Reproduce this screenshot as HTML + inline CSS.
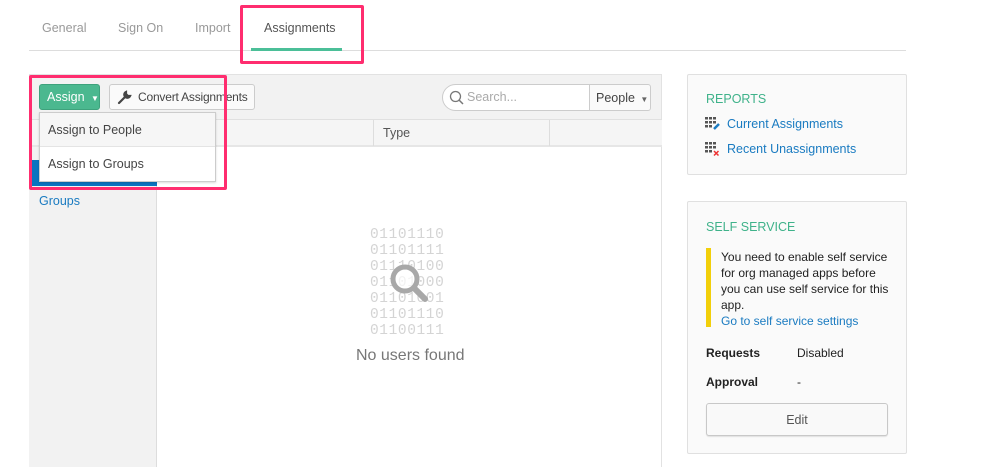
<!DOCTYPE html>
<html style="width:998px;height:467px;overflow:hidden"><head><meta charset="utf-8"><style>
*{box-sizing:border-box;margin:0;padding:0}
body{width:998px;height:467px;background:#fff;font-family:"Liberation Sans",sans-serif;position:relative;overflow:hidden;color:#333}
.a{position:absolute;white-space:nowrap}
.tab{position:absolute;top:21px;font-size:12.5px;color:#999}
.pink{position:absolute;border:3px solid #ff2d6f;border-radius:2px}
.link{color:#1a7bc1;font-size:12.5px}
.bin{font-family:"Liberation Mono",monospace;font-size:14.5px;color:#d4d4d4;line-height:16px;letter-spacing:0.6px}
</style></head><body>
<div class="tab" style="left:42px">General</div>
<div class="tab" style="left:118px">Sign On</div>
<div class="tab" style="left:195px">Import</div>
<div class="tab" style="left:264px;color:#555">Assignments</div>
<div class="a" style="left:29px;top:50px;width:877px;height:1px;background:#ddd"></div>
<div class="a" style="left:251px;top:48px;width:91px;height:3px;background:#4bbf98"></div>
<div class="pink" style="left:240px;top:5px;width:124px;height:59px"></div>

<!-- main panel -->
<div class="a" style="left:29px;top:74px;width:633px;height:393px;border:1px solid #e2e2e2;border-bottom:none;background:#fff"></div>
<div class="a" style="left:29px;top:74px;width:633px;height:46px;background:#f2f2f2;border:1px solid #e2e2e2;border-bottom:none"></div>
<div class="a" style="left:29px;top:119px;width:633px;height:28px;background:#f5f5f5;border-top:1px solid #e0e0e0;border-bottom:2px solid #e6e6e6"></div>
<div class="a" style="left:373px;top:120px;width:1px;height:26px;background:#ddd"></div>
<div class="a" style="left:549px;top:120px;width:1px;height:26px;background:#ddd"></div>
<div class="a" style="left:383px;top:126px;font-size:12.5px;color:#555">Type</div>
<div class="a" style="left:29px;top:147px;width:128px;height:320px;background:#f2f2f2;border-right:1px solid #ddd"></div>
<div class="a" style="left:31px;top:160px;width:126px;height:26px;background:#0a74c0"></div>
<div class="a link" style="left:39px;top:194px">Groups</div>

<!-- buttons -->
<div class="a" style="left:39px;top:84px;width:61px;height:26px;background:#4bb88f;border:1px solid #3ea27c;border-radius:3px;color:#fff;font-size:12.5px;padding:5px 0 0 7px">Assign <span style="font-size:8px;margin-left:3px">▼</span></div>
<div class="a" style="left:109px;top:84px;width:146px;height:26px;background:#fafafa;border:1px solid #ccc;border-radius:3px;font-size:12px;color:#444;padding:5px 0 0 28px;letter-spacing:-0.2px">Convert Assignments</div>
<svg class="a" style="left:117px;top:89px" width="16" height="16" viewBox="0 0 16 16"><path d="M2 14 L8 8 M9 3 a3 3 0 1 0 4 4 l-2 0 -2 -2 z" stroke="#444" stroke-width="2.2" fill="#444" stroke-linecap="round"/></svg>

<!-- dropdown -->
<div class="a" style="left:39px;top:112px;width:177px;height:70px;background:#fff;border:1px solid #ccc;box-shadow:0 1px 2px rgba(0,0,0,.15)"></div>
<div class="a" style="left:40px;top:113px;width:175px;height:34px;background:#f6f6f6;border-bottom:1px solid #e4e4e4"></div>
<div class="a" style="left:48px;top:123px;font-size:12.5px;color:#444">Assign to People</div>
<div class="a" style="left:48px;top:157px;font-size:12.5px;color:#444">Assign to Groups</div>
<div class="pink" style="left:29px;top:75px;width:198px;height:115px"></div>

<!-- search -->
<div class="a" style="left:442px;top:84px;width:148px;height:27px;background:#fff;border:1px solid #ccc;border-radius:14px 0 0 14px"></div>
<svg class="a" style="left:449px;top:90px" width="16" height="16"><circle cx="6.5" cy="6.5" r="5" stroke="#777" stroke-width="1.3" fill="none"/><path d="M10 10 L14 14" stroke="#777" stroke-width="1.5"/></svg>
<div class="a" style="left:467px;top:90px;font-size:12.5px;color:#aaa">Search...</div>
<div class="a" style="left:589px;top:84px;width:62px;height:27px;background:#fafafa;border:1px solid #ccc;border-radius:0 3px 3px 0;font-size:12.5px;color:#444;padding:6px 0 0 6px">People <span style="font-size:8px;margin-left:2px;color:#666">▼</span></div>

<!-- empty -->
<div class="a bin" style="left:370px;top:227px">01101110<br>01101111<br>01110100<br>01101000<br>01101001<br>01101110<br>01100111</div>
<svg class="a" style="left:385px;top:259px" width="50" height="50"><circle cx="20" cy="20" r="12" stroke="#a8a8a8" stroke-width="5" fill="rgba(255,255,255,.7)"/><path d="M29 29 L40 40" stroke="#a8a8a8" stroke-width="6" stroke-linecap="round"/></svg>
<div class="a" style="left:356px;top:347px;font-size:16px;color:#777">No users found</div>

<!-- reports -->
<div class="a" style="left:687px;top:74px;width:220px;height:101px;background:#fafafa;border:1px solid #e0e0e0;border-radius:2px"></div>
<div class="a" style="left:706px;top:92px;font-size:12.5px;color:#3fb28a">REPORTS</div>
<svg class="a" style="left:705px;top:117px" width="16" height="14"><g fill="#555"><rect x="0" y="0" width="3" height="2.5"/><rect x="4" y="0" width="3" height="2.5"/><rect x="8" y="0" width="3" height="2.5"/><rect x="0" y="4" width="3" height="2.5"/><rect x="4" y="4" width="3" height="2.5"/><rect x="8" y="4" width="3" height="2.5"/><rect x="0" y="8" width="3" height="2.5"/><rect x="4" y="8" width="3" height="2.5"/></g><path d="M9 12 L14 7" stroke="#1a7bc1" stroke-width="2.5"/></svg>
<div class="a link" style="left:727px;top:117px">Current Assignments</div>
<svg class="a" style="left:705px;top:142px" width="16" height="16"><g fill="#555"><rect x="0" y="0" width="3" height="2.5"/><rect x="4" y="0" width="3" height="2.5"/><rect x="8" y="0" width="3" height="2.5"/><rect x="0" y="4" width="3" height="2.5"/><rect x="4" y="4" width="3" height="2.5"/><rect x="8" y="4" width="3" height="2.5"/><rect x="0" y="8" width="3" height="2.5"/><rect x="4" y="8" width="3" height="2.5"/></g><path d="M9 9 L13.5 13.5 M13.5 9 L9 13.5" stroke="#e33" stroke-width="1.5"/></svg>
<div class="a link" style="left:727px;top:142px">Recent Unassignments</div>

<!-- self service -->
<div class="a" style="left:687px;top:201px;width:220px;height:253px;background:#fafafa;border:1px solid #e0e0e0;border-radius:2px"></div>
<div class="a" style="left:706px;top:220px;font-size:12.5px;color:#3fb28a">SELF SERVICE</div>
<div class="a" style="left:706px;top:248px;width:5px;height:79px;background:#f2cf0a"></div>
<div class="a" style="left:721px;top:249px;font-size:12px;line-height:16px;color:#222">You need to enable self service<br>for org managed apps before<br>you can use self service for this<br>app.<br><span style="color:#1a7bc1">Go to self service settings</span></div>
<div class="a" style="left:706px;top:346px;font-size:12px;font-weight:bold;color:#222">Requests</div>
<div class="a" style="left:797px;top:346px;font-size:12px;color:#222">Disabled</div>
<div class="a" style="left:706px;top:375px;font-size:12px;font-weight:bold;color:#222">Approval</div>
<div class="a" style="left:797px;top:375px;font-size:12px;color:#222">-</div>
<div class="a" style="left:706px;top:403px;width:182px;height:33px;background:#f9f9f9;border:1px solid #c8c8c8;border-radius:3px;box-shadow:0 1px 1px rgba(0,0,0,.1);text-align:center;font-size:12.5px;color:#555;padding-top:9px">Edit</div>
</body></html>
